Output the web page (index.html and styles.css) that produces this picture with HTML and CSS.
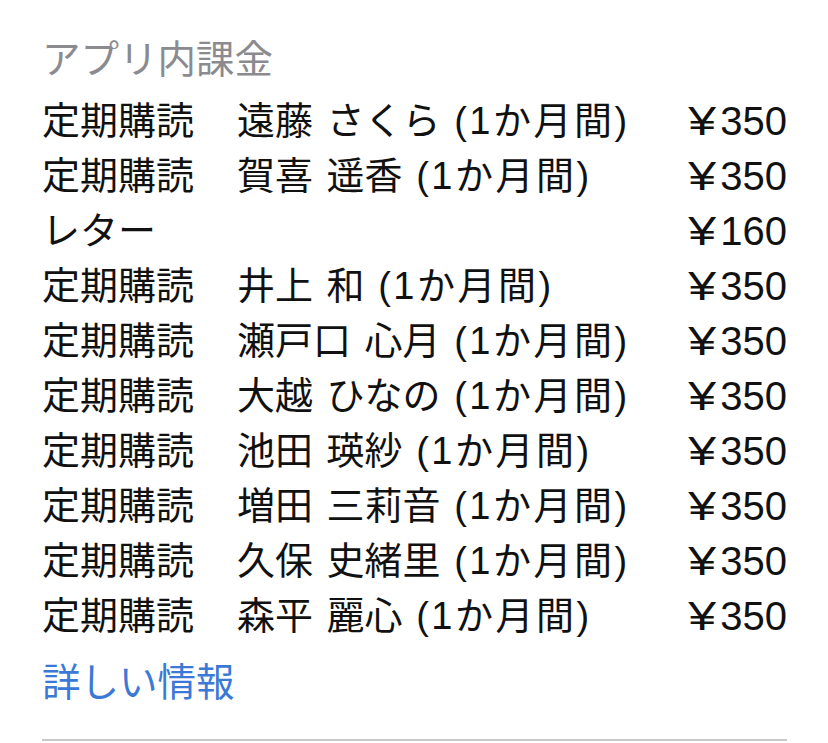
FILE: index.html
```html
<!DOCTYPE html>
<html lang="ja">
<head>
<meta charset="utf-8">
<link rel="stylesheet" href="styles.css">
</head>
<body>
<div class="panel">
  <div class="title">アプリ内課金</div>
  <ul class="list">
    <li class="row"><span class="kind">定期購読</span><span class="name">遠藤 さくら <span class="term">(1か月間)</span></span><span class="price"><span class="yen">¥</span>350</span></li>
    <li class="row"><span class="kind">定期購読</span><span class="name">賀喜 遥香 <span class="term">(1か月間)</span></span><span class="price"><span class="yen">¥</span>350</span></li>
    <li class="row"><span class="kind">レター</span><span class="name"></span><span class="price"><span class="yen">¥</span>160</span></li>
    <li class="row"><span class="kind">定期購読</span><span class="name">井上 和 <span class="term">(1か月間)</span></span><span class="price"><span class="yen">¥</span>350</span></li>
    <li class="row"><span class="kind">定期購読</span><span class="name">瀬戸口 心月 <span class="term">(1か月間)</span></span><span class="price"><span class="yen">¥</span>350</span></li>
    <li class="row"><span class="kind">定期購読</span><span class="name">大越 ひなの <span class="term">(1か月間)</span></span><span class="price"><span class="yen">¥</span>350</span></li>
    <li class="row"><span class="kind">定期購読</span><span class="name">池田 瑛紗 <span class="term">(1か月間)</span></span><span class="price"><span class="yen">¥</span>350</span></li>
    <li class="row"><span class="kind">定期購読</span><span class="name">増田 三莉音 <span class="term">(1か月間)</span></span><span class="price"><span class="yen">¥</span>350</span></li>
    <li class="row"><span class="kind">定期購読</span><span class="name">久保 史緒里 <span class="term">(1か月間)</span></span><span class="price"><span class="yen">¥</span>350</span></li>
    <li class="row"><span class="kind">定期購読</span><span class="name">森平 麗心 <span class="term">(1か月間)</span></span><span class="price"><span class="yen">¥</span>350</span></li>
  </ul>
  <a class="more" href="#">詳しい情報</a>
  <div class="divider"></div>
</div>
</body>
</html>
```
FILE: styles.css
```css
html, body {
  margin: 0;
  padding: 0;
  background: #ffffff;
}
body {
  font-family: "Liberation Sans", "Noto Sans CJK JP", sans-serif;
  color: #111111;
}
.panel {
  padding: 32px 41px 0 42px;
  display: flex;
  flex-direction: column;
}
.title {
  font-size: 38.5px;
  line-height: 55px;
  color: #8b8b8f;
}
.list {
  list-style: none;
  margin: 7px 0 0 0;
  padding: 0;
}
.row {
  display: flex;
  align-items: center;
  height: 55px;
  font-size: 38px;
  line-height: 55px;
}
.kind {
  width: 195px;
  flex: none;
}
.name {
  flex: 1;
  word-spacing: 3px;
}
.term {
  letter-spacing: 2.5px;
}
.price {
  flex: none;
  text-align: right;
  font-size: 40px;
}
.yen {
  display: inline-block;
  transform: scaleX(1.25);
  margin-right: 7px;
}
.more {
  margin-top: 11px;
  font-size: 38.5px;
  line-height: 55px;
  color: #3b79d6;
  text-decoration: none;
  align-self: flex-start;
}
.divider {
  margin-top: 29px;
  height: 2px;
  background: #c9c9cb;
}
```
